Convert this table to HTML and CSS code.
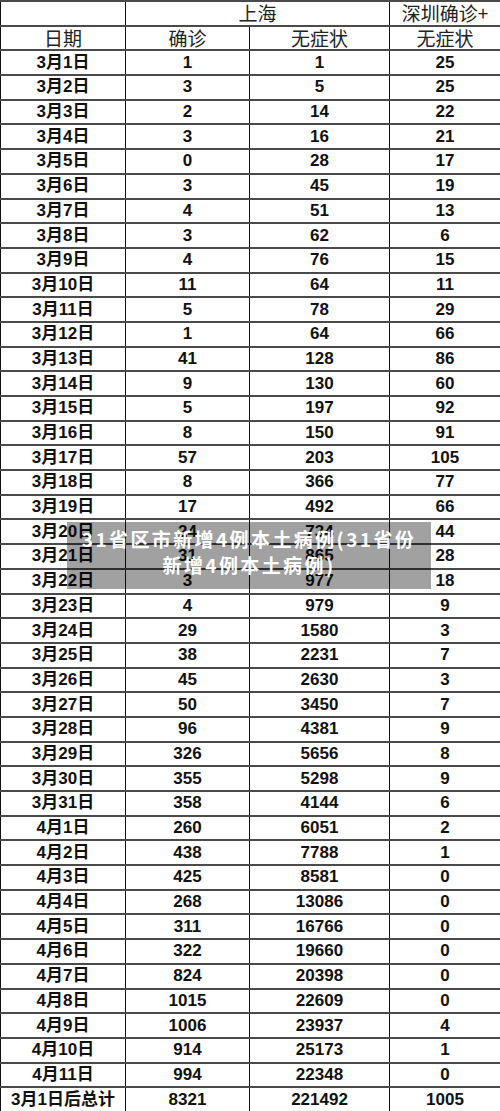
FILE: index.html
```html
<!DOCTYPE html>
<html lang="zh">
<head>
<meta charset="utf-8">
<link rel="stylesheet" href="styles.css">
</head>
<body>
<div class="wrap">
<table class="data">
<colgroup><col class="c1"><col class="c2"><col class="c3"><col class="c4"></colgroup>
<tbody>
<tr class="head"><td></td><td colspan="2">上海</td><td>深圳确诊+</td></tr>
<tr class="head"><td>日期</td><td>确诊</td><td>无症状</td><td>无症状</td></tr>
<tr><td>3月1日</td><td>1</td><td>1</td><td>25</td></tr>
<tr><td>3月2日</td><td>3</td><td>5</td><td>25</td></tr>
<tr><td>3月3日</td><td>2</td><td>14</td><td>22</td></tr>
<tr><td>3月4日</td><td>3</td><td>16</td><td>21</td></tr>
<tr><td>3月5日</td><td>0</td><td>28</td><td>17</td></tr>
<tr><td>3月6日</td><td>3</td><td>45</td><td>19</td></tr>
<tr><td>3月7日</td><td>4</td><td>51</td><td>13</td></tr>
<tr><td>3月8日</td><td>3</td><td>62</td><td>6</td></tr>
<tr><td>3月9日</td><td>4</td><td>76</td><td>15</td></tr>
<tr><td>3月10日</td><td>11</td><td>64</td><td>11</td></tr>
<tr><td>3月11日</td><td>5</td><td>78</td><td>29</td></tr>
<tr><td>3月12日</td><td>1</td><td>64</td><td>66</td></tr>
<tr><td>3月13日</td><td>41</td><td>128</td><td>86</td></tr>
<tr><td>3月14日</td><td>9</td><td>130</td><td>60</td></tr>
<tr><td>3月15日</td><td>5</td><td>197</td><td>92</td></tr>
<tr><td>3月16日</td><td>8</td><td>150</td><td>91</td></tr>
<tr><td>3月17日</td><td>57</td><td>203</td><td>105</td></tr>
<tr><td>3月18日</td><td>8</td><td>366</td><td>77</td></tr>
<tr><td>3月19日</td><td>17</td><td>492</td><td>66</td></tr>
<tr><td>3月20日</td><td>24</td><td>734</td><td>44</td></tr>
<tr><td>3月21日</td><td>31</td><td>865</td><td>28</td></tr>
<tr><td>3月22日</td><td>3</td><td>977</td><td>18</td></tr>
<tr><td>3月23日</td><td>4</td><td>979</td><td>9</td></tr>
<tr><td>3月24日</td><td>29</td><td>1580</td><td>3</td></tr>
<tr><td>3月25日</td><td>38</td><td>2231</td><td>7</td></tr>
<tr><td>3月26日</td><td>45</td><td>2630</td><td>3</td></tr>
<tr><td>3月27日</td><td>50</td><td>3450</td><td>7</td></tr>
<tr><td>3月28日</td><td>96</td><td>4381</td><td>9</td></tr>
<tr><td>3月29日</td><td>326</td><td>5656</td><td>8</td></tr>
<tr><td>3月30日</td><td>355</td><td>5298</td><td>9</td></tr>
<tr><td>3月31日</td><td>358</td><td>4144</td><td>6</td></tr>
<tr><td>4月1日</td><td>260</td><td>6051</td><td>2</td></tr>
<tr><td>4月2日</td><td>438</td><td>7788</td><td>1</td></tr>
<tr><td>4月3日</td><td>425</td><td>8581</td><td>0</td></tr>
<tr><td>4月4日</td><td>268</td><td>13086</td><td>0</td></tr>
<tr><td>4月5日</td><td>311</td><td>16766</td><td>0</td></tr>
<tr><td>4月6日</td><td>322</td><td>19660</td><td>0</td></tr>
<tr><td>4月7日</td><td>824</td><td>20398</td><td>0</td></tr>
<tr><td>4月8日</td><td>1015</td><td>22609</td><td>0</td></tr>
<tr><td>4月9日</td><td>1006</td><td>23937</td><td>4</td></tr>
<tr><td>4月10日</td><td>914</td><td>25173</td><td>1</td></tr>
<tr><td>4月11日</td><td>994</td><td>22348</td><td>0</td></tr>
<tr><td>3月1日后总计</td><td>8321</td><td>221492</td><td>1005</td></tr>
</tbody>
</table>
<div class="caption">31省区市新增4例本土病例(31省份<br>新增4例本土病例)</div>
</div>
</body>
</html>
```

FILE: styles.css
```css
html, body {
  margin: 0;
  padding: 0;
  background: #ffffff;
}
.wrap {
  position: relative;
  width: 500px;
  height: 1111px;
  overflow: hidden;
}
.data {
  width: 500px;
  table-layout: fixed;
  border-collapse: collapse;
  font-family: "Liberation Sans", "Noto Sans CJK SC", sans-serif;
  font-weight: bold;
  font-size: 17px;
  color: #111;
}
.c1 { width: 125px; }
.c2 { width: 124px; }
.c3 { width: 140px; }
.c4 { width: 111px; }
.data tr {
  height: 24.69px;
}
.data td {
  padding: 0;
  text-align: center;
  vertical-align: middle;
  line-height: 20px;
  border-left: 1px solid #111;
  border-right: 1px solid #111;
  border-top: 2px solid #4a4a4a;
  border-bottom: 2px solid #4a4a4a;
  white-space: nowrap;
}
.head td {
  font-family: "Noto Sans CJK SC", sans-serif;
  font-weight: 400;
  font-size: 19px;
  color: #222;
}
.caption {
  position: absolute;
  left: 67px;
  top: 522px;
  width: 364px;
  height: 67px;
  box-sizing: border-box;
  padding-top: 4px;
  background: rgba(0, 0, 0, 0.37);
  color: #ffffff;
  font-family: "Noto Sans CJK SC", sans-serif;
  font-weight: bold;
  font-size: 19px;
  line-height: 26px;
  letter-spacing: 2.4px;
  text-align: center;
}
```
